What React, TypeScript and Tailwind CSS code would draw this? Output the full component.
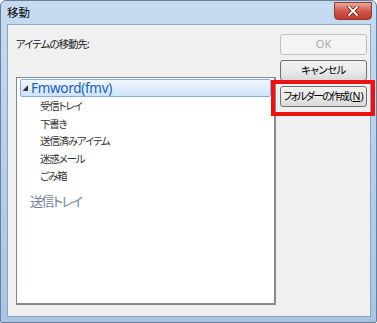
import React from "react";

export default function App() {
  return (
    <div className="w-[377px] h-[323px] bg-white font-['Noto_Sans','Noto_Sans_CJK_JP',sans-serif] [font-feature-settings:'palt']">
      <div className="relative w-[377px] h-[323px] rounded-t-[6px] rounded-b-[2px] border border-[#6b7f99] bg-gradient-to-b from-[#c6dbf1] via-[#b7cfea] to-[#a9c5e6] flex flex-col">
        {/* title bar */}
        <div className="h-[23px] flex items-start justify-between pl-[6px] pr-[4px]">
          <span className="text-[11.5px] leading-[12px] mt-[6px] text-black">移動</span>
          <div className="mt-[1px] w-[38px] h-[18px] rounded-b-[4px] border border-[#8a3a3a] bg-gradient-to-b from-[#e8a89c] via-[#d2574a] to-[#c0392b] flex items-center justify-center">
            <svg width="12" height="10" viewBox="0 0 12 10">
              <path d="M2 1 L10 9 M10 1 L2 9" stroke="#5a1a1a" strokeWidth="3.2" strokeLinecap="square" />
              <path d="M2 1 L10 9 M10 1 L2 9" stroke="#ffffff" strokeWidth="1.8" strokeLinecap="square" />
            </svg>
          </div>
        </div>
        {/* client panel */}
        <div className="ml-[6px] mr-[5px] mb-[5px] flex-1 border border-[#8ea3bd] bg-[#f0f0f0] flex">
          <div className="flex flex-col pl-[8px] pt-[12px]">
            <div className="text-[10.5px] leading-[14px] text-[#222] h-[40px] tracking-[-1px] whitespace-nowrap">アイテムの移動先:</div>
            <div className="w-[260px] h-[228px] bg-white border-l border-t border-[#828790] border-r-2 border-b-2 border-r-[#8a8a8a] border-b-[#8a8a8a] px-[3px] pt-[1px]">
              <div className="h-[18px] rounded-[2px] border border-[#84acdd] bg-gradient-to-b from-[#f1f7fe] to-[#cfe3f8] flex items-center pl-[1px]">
                <svg width="8" height="8" viewBox="0 0 8 8" className="mr-[1px]">
                  <path d="M6 1 L6 7 L0.5 7 Z" fill="#333" />
                </svg>
                <span className="text-[13.5px] leading-[16px] tracking-[-0.3px] text-[#1f5fb0]">Fmword(fmv)</span>
              </div>
              <div className="flex flex-col pl-[20px] pt-[1px] text-[10.5px] leading-[17.6px] text-[#333] tracking-[-1.2px] whitespace-nowrap">
                <span>受信トレイ</span>
                <span>下書き</span>
                <span>送信済みアイテム</span>
                <span>迷惑メール</span>
                <span>ごみ箱</span>
              </div>
              <div className="pl-[10px] pt-[7px] text-[13px] leading-[16px] text-[#6f7f96] tracking-[-1.5px]">送信トレイ</div>
            </div>
          </div>
          <div className="flex flex-col ml-[4px] pt-[9px] gap-[5px]">
            <div className="w-[87px] h-[21px] rounded-[3px] border border-[#c0c0c0] bg-[#f4f4f4] flex items-center justify-center text-[11px] text-[#a8a8a8]">OK</div>
            <div className="w-[87px] h-[21px] rounded-[3px] border border-[#707070] bg-gradient-to-b from-[#f2f2f2] via-[#ebebeb] to-[#d8d8d8] flex items-center justify-center text-[10.5px] tracking-[-0.6px] text-black whitespace-nowrap">キャンセル</div>
            <div className="w-[87px] h-[21px] rounded-[3px] border border-[#707070] bg-gradient-to-b from-[#f2f2f2] via-[#ebebeb] to-[#d8d8d8] flex items-center justify-center text-[10.5px] text-black whitespace-nowrap">
              <span className="tracking-[-1.6px]">フォルダーの作成</span>
              <span className="tracking-[0px] ml-[1px]">(<span className="underline">N</span>)</span>
            </div>
          </div>
        </div>
        {/* annotation */}
        <div className="absolute left-[270px] top-[79px] w-[104px] h-[36px] border-[4px] border-[#ee1111]" />
      </div>
    </div>
  );
}
